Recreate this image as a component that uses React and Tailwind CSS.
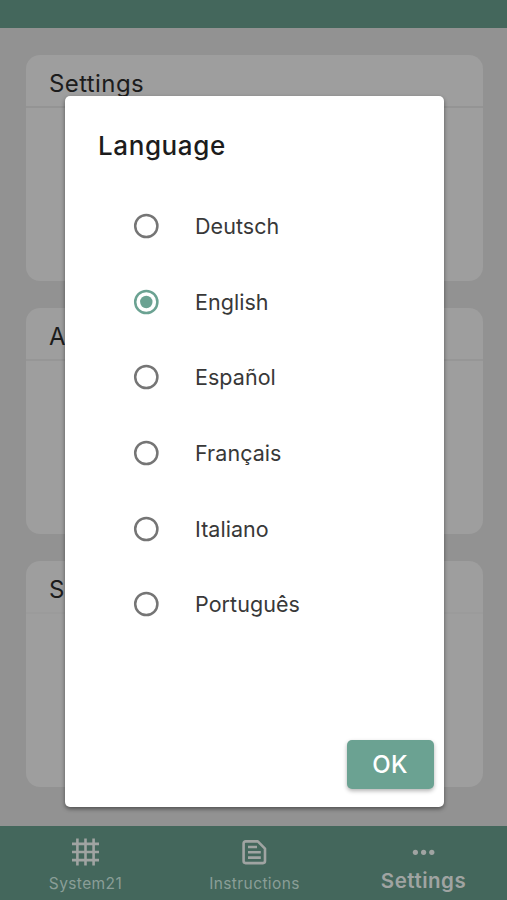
const languages = ["Deutsch", "English", "Español", "Français", "Italiano", "Português"];

function Card({ title, line }) {
  return (
    <section className="h-[226px] shrink-0 rounded-[14px] bg-[#9e9e9e]">
      <h2 className={`h-[53px] border-b-2 pl-[23px] pt-[13px] text-[24px] leading-[32px] tracking-[0.4px] text-[#1c1c1c] ${line}`}>{title}</h2>
    </section>
  );
}

function Radio({ label, checked }) {
  return (
    <label className="flex h-[75.7px] items-center">
      <svg width="26" height="26" viewBox="0 0 26 26" fill="none" className={checked ? "text-[#6ba292]" : "text-[#757575]"}>
        <circle cx="13.3" cy="13" r="11.1" stroke="currentColor" strokeWidth="2.5" />
        {checked && <circle cx="13.3" cy="13" r="6.2" fill="currentColor" />}
      </svg>
      <span className="ml-[36px] text-[21.5px] leading-[28px] tracking-[0.05px] text-[#383838]">{label}</span>
    </label>
  );
}

function HashIcon() {
  return (
    <svg width="28" height="28" viewBox="0 0 28 28" stroke="currentColor" strokeWidth="2.6" fill="none">
      <path d="M6.4 .5v27M14.5 .5v27M22.6 .5v27M1 5.9h27M1 14h27M1 22.1h27" />
    </svg>
  );
}

function DocumentIcon() {
  return (
    <svg width="26" height="26" viewBox="0 0 26 26" stroke="currentColor" strokeWidth="2.6" fill="none">
      <path d="M4.6 2.4h12.2l7.2 7.2V22.1a2 2 0 0 1-2 2H4.6a2 2 0 0 1-2-2V4.4a2 2 0 0 1 2-2Z" strokeLinejoin="round" />
      <path d="M7 8h9M7 13.3h12.8M7 18.6h12.8" />
    </svg>
  );
}

function DotsIcon() {
  return (
    <svg width="24" height="6" viewBox="0 0 24 6" fill="currentColor">
      <circle cx="4.4" cy="3.3" r="2.6" />
      <circle cx="12.6" cy="3.3" r="2.6" />
      <circle cx="20.8" cy="3.3" r="2.6" />
    </svg>
  );
}

function Tab({ icon, children, className }) {
  return (
    <div className="flex w-[169.5px] flex-col items-center pt-[10px]">
      <div className="flex h-[32px] items-center">{icon}</div>
      <span className={`whitespace-nowrap ${className}`}>{children}</span>
    </div>
  );
}

export default function App() {
  return (
    <div className="relative flex h-[900px] w-[507px] flex-col overflow-hidden bg-[#929292] font-['Inter','Liberation_Sans',sans-serif]">
      <header className="h-[28px] shrink-0 bg-[#44675c]" />
      <main className="flex flex-1 flex-col gap-[27px] pl-[26px] pr-[24px] pt-[27px]">
        <Card title="Settings" line="border-[#949494]" />
        <Card title="A" line="border-[#969696]" />
        <Card title="S" line="border-[#9b9b9b]" />
      </main>
      <nav className="flex h-[74px] shrink-0 bg-[#44675c] text-[#a0a4a2]">
        <Tab icon={<HashIcon />} className="pl-[2px] text-[15.5px] leading-[31px] tracking-[0.4px] text-[#8a9e97]">System21</Tab>
        <Tab icon={<DocumentIcon />} className="pl-[2px] text-[15.5px] leading-[31px] tracking-[0.4px] text-[#8a9e97]">Instructions</Tab>
        <Tab icon={<DotsIcon />} className="pl-[2px] text-[20.5px] font-semibold leading-[26px] tracking-[0.5px]">Settings</Tab>
      </nav>

      <div role="dialog" className="absolute left-[65px] top-[96px] flex h-[711px] w-[379px] flex-col rounded-[5px] bg-white shadow-[0_2px_4px_rgba(0,0,0,0.45)]">
        <h1 className="pl-[33px] pt-[34px] text-[26px] font-medium leading-[32px] tracking-[0.6px] text-[#1c1c1c]">Language</h1>
        <div className="pl-[68px] pt-[26px]">
          {languages.map((name) => (
            <Radio key={name} label={name} checked={name === "English"} />
          ))}
        </div>
        <button className="mb-[18px] mr-[10px] mt-auto h-[49px] w-[87px] self-end rounded-[5px] bg-[#6ba292] pr-px pt-px text-[24px] font-medium tracking-[0.4px] text-white shadow-[0_2px_4px_rgba(0,0,0,0.3)]">OK</button>
      </div>
    </div>
  );
}
